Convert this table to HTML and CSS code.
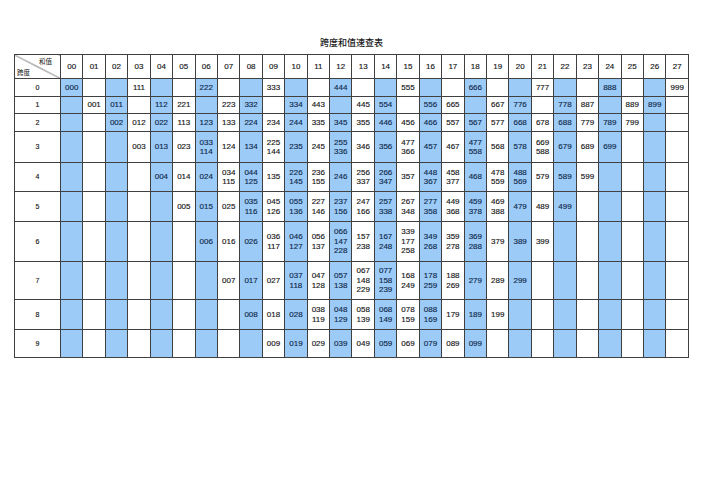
FILE: index.html
```html
<!DOCTYPE html>
<html lang="zh">
<head>
<meta charset="utf-8">
<title>跨度和值速查表</title>
<link rel="stylesheet" href="styles.css">
</head>
<body>
<div class="page">
  <div class="title">跨度和值速查表</div>
  <table class="grid">
    <colgroup><col class="c-label"></colgroup>
    <tr class="h-hdr">
      <th class="corner"><div class="corner-in"><span class="c-top">和值</span><span class="c-bot">跨度</span></div></th>
      <th>00</th><th>01</th><th>02</th><th>03</th><th>04</th><th>05</th><th>06</th><th>07</th><th>08</th><th>09</th>
      <th>10</th><th>11</th><th>12</th><th>13</th><th>14</th><th>15</th><th>16</th><th>17</th><th>18</th><th>19</th>
      <th>20</th><th>21</th><th>22</th><th>23</th><th>24</th><th>25</th><th>26</th><th>27</th>
    </tr>
    <tr class="h0">
      <td class="lab">0</td>
      <td class="b">000</td><td></td><td class="b"></td><td>111</td><td class="b"></td><td></td><td class="b">222</td><td></td><td class="b"></td><td>333</td>
      <td class="b"></td><td></td><td class="b">444</td><td></td><td class="b"></td><td>555</td><td class="b"></td><td></td><td class="b">666</td><td></td>
      <td class="b"></td><td>777</td><td class="b"></td><td></td><td class="b">888</td><td></td><td class="b"></td><td>999</td>
    </tr>
    <tr class="h1">
      <td class="lab">1</td>
      <td class="b"></td><td>001</td><td class="b">011</td><td></td><td class="b">112</td><td>221</td><td class="b"></td><td>223</td><td class="b">332</td><td></td>
      <td class="b">334</td><td>443</td><td class="b"></td><td>445</td><td class="b">554</td><td></td><td class="b">556</td><td>665</td><td class="b"></td><td>667</td>
      <td class="b">776</td><td></td><td class="b">778</td><td>887</td><td class="b"></td><td>889</td><td class="b">899</td><td></td>
    </tr>
    <tr class="h2">
      <td class="lab">2</td>
      <td class="b"></td><td></td><td class="b">002</td><td>012</td><td class="b">022</td><td>113</td><td class="b">123</td><td>133</td><td class="b">224</td><td>234</td>
      <td class="b">244</td><td>335</td><td class="b">345</td><td>355</td><td class="b">446</td><td>456</td><td class="b">466</td><td>557</td><td class="b">567</td><td>577</td>
      <td class="b">668</td><td>678</td><td class="b">688</td><td>779</td><td class="b">789</td><td>799</td><td class="b"></td><td></td>
    </tr>
    <tr class="h3">
      <td class="lab">3</td>
      <td class="b"></td><td></td><td class="b"></td><td>003</td><td class="b">013</td><td>023</td><td class="b">033<br>114</td><td>124</td><td class="b">134</td><td>225<br>144</td>
      <td class="b">235</td><td>245</td><td class="b">255<br>336</td><td>346</td><td class="b">356</td><td>477<br>366</td><td class="b">457</td><td>467</td><td class="b">477<br>558</td><td>568</td>
      <td class="b">578</td><td>669<br>588</td><td class="b">679</td><td>689</td><td class="b">699</td><td></td><td class="b"></td><td></td>
    </tr>
    <tr class="h4">
      <td class="lab">4</td>
      <td class="b"></td><td></td><td class="b"></td><td></td><td class="b">004</td><td>014</td><td class="b">024</td><td>034<br>115</td><td class="b">044<br>125</td><td>135</td>
      <td class="b">226<br>145</td><td>236<br>155</td><td class="b">246</td><td>256<br>337</td><td class="b">266<br>347</td><td>357</td><td class="b">448<br>367</td><td>458<br>377</td><td class="b">468</td><td>478<br>559</td>
      <td class="b">488<br>569</td><td>579</td><td class="b">589</td><td>599</td><td class="b"></td><td></td><td class="b"></td><td></td>
    </tr>
    <tr class="h5">
      <td class="lab">5</td>
      <td class="b"></td><td></td><td class="b"></td><td></td><td class="b"></td><td>005</td><td class="b">015</td><td>025</td><td class="b">035<br>116</td><td>045<br>126</td>
      <td class="b">055<br>136</td><td>227<br>146</td><td class="b">237<br>156</td><td>247<br>166</td><td class="b">257<br>338</td><td>267<br>348</td><td class="b">277<br>358</td><td>449<br>368</td><td class="b">459<br>378</td><td>469<br>388</td>
      <td class="b">479</td><td>489</td><td class="b">499</td><td></td><td class="b"></td><td></td><td class="b"></td><td></td>
    </tr>
    <tr class="h6">
      <td class="lab">6</td>
      <td class="b"></td><td></td><td class="b"></td><td></td><td class="b"></td><td></td><td class="b">006</td><td>016</td><td class="b">026</td><td>036<br>117</td>
      <td class="b">046<br>127</td><td>056<br>137</td><td class="b">066<br>147<br>228</td><td>157<br>238</td><td class="b">167<br>248</td><td>339<br>177<br>258</td><td class="b">349<br>268</td><td>359<br>278</td><td class="b">369<br>288</td><td>379</td>
      <td class="b">389</td><td>399</td><td class="b"></td><td></td><td class="b"></td><td></td><td class="b"></td><td></td>
    </tr>
    <tr class="h7">
      <td class="lab">7</td>
      <td class="b"></td><td></td><td class="b"></td><td></td><td class="b"></td><td></td><td class="b"></td><td>007</td><td class="b">017</td><td>027</td>
      <td class="b">037<br>118</td><td>047<br>128</td><td class="b">057<br>138</td><td>067<br>148<br>229</td><td class="b">077<br>158<br>239</td><td>168<br>249</td><td class="b">178<br>259</td><td>188<br>269</td><td class="b">279</td><td>289</td>
      <td class="b">299</td><td></td><td class="b"></td><td></td><td class="b"></td><td></td><td class="b"></td><td></td>
    </tr>
    <tr class="h8">
      <td class="lab">8</td>
      <td class="b"></td><td></td><td class="b"></td><td></td><td class="b"></td><td></td><td class="b"></td><td></td><td class="b">008</td><td>018</td>
      <td class="b">028</td><td>038<br>119</td><td class="b">048<br>129</td><td>058<br>139</td><td class="b">068<br>149</td><td>078<br>159</td><td class="b">088<br>169</td><td>179</td><td class="b">189</td><td>199</td>
      <td class="b"></td><td></td><td class="b"></td><td></td><td class="b"></td><td></td><td class="b"></td><td></td>
    </tr>
    <tr class="h9">
      <td class="lab">9</td>
      <td class="b"></td><td></td><td class="b"></td><td></td><td class="b"></td><td></td><td class="b"></td><td></td><td class="b"></td><td>009</td>
      <td class="b">019</td><td>029</td><td class="b">039</td><td>049</td><td class="b">059</td><td>069</td><td class="b">079</td><td>089</td><td class="b">099</td><td></td>
      <td class="b"></td><td></td><td class="b"></td><td></td><td class="b"></td><td></td><td class="b"></td><td></td>
    </tr>
  </table>
</div>
</body>
</html>
```
FILE: styles.css
```css
html, body {
  margin: 0;
  padding: 0;
  background: #ffffff;
}
.page {
  width: 675px;
  margin-left: 14px;
  padding-top: 37px;
}
.title {
  text-align: center;
  font-family: "Noto Sans CJK JP", "Noto Sans CJK SC", sans-serif;
  font-size: 9px;
  line-height: 12px;
  height: 12px;
  margin-bottom: 5px;
  color: #1a1a1a;
  font-weight: 500;
}
.grid {
  width: 675px;
  border-collapse: collapse;
  table-layout: fixed;
  font-family: "Liberation Sans", Arial, sans-serif;
  font-size: 8px;
  line-height: 9.5px;
  color: #161616;
  -webkit-text-stroke: 0.15px currentColor;
}
.c-label {
  width: 46px;
}
.grid th,
.grid td {
  border: 1px solid #404040;
  padding: 0;
  text-align: center;
  vertical-align: middle;
  font-weight: normal;
}
.grid td.b {
  background: #9ccbf8;
  color: #102a4a;
}
.grid td.lab {
  font-size: 7px;
}
.corner {
  background: linear-gradient(to top right, transparent calc(50% - 0.6px), #404040 50%, transparent calc(50% + 0.6px));
}
.corner-in {
  display: flex;
  flex-direction: column;
  justify-content: space-between;
  height: 22px;
  padding: 1px 8px 2px 2px;
  box-sizing: border-box;
  font-family: "Noto Sans CJK JP", "Noto Sans CJK SC", sans-serif;
  font-size: 6.5px;
  line-height: 8px;
  -webkit-text-stroke: 0;
}
.c-top {
  align-self: flex-end;
}
.c-bot {
  align-self: flex-start;
}
.h-hdr { height: 24px; }
.h0 { height: 18px; }
.h1 { height: 17px; }
.h2 { height: 18px; }
.h3 { height: 31px; }
.h4 { height: 29px; }
.h5 { height: 30px; }
.h6 { height: 40px; }
.h7 { height: 38px; }
.h8 { height: 30px; }
.h9 { height: 28px; }
```
